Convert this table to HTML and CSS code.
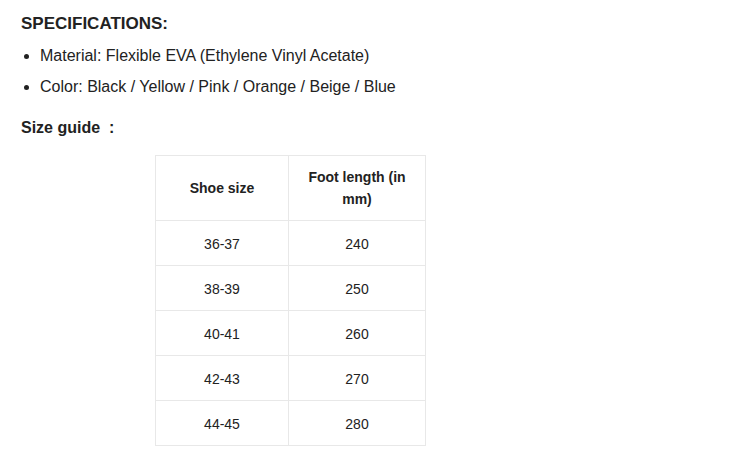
FILE: index.html
```html
<!DOCTYPE html>
<html>
<head>
<meta charset="utf-8">
<link rel="stylesheet" href="styles.css">
</head>
<body>
<div class="page">
  <h2 class="title">SPECIFICATIONS:</h2>
  <ul class="specs">
    <li>Material: Flexible EVA (Ethylene Vinyl Acetate)</li>
    <li>Color: Black / Yellow / Pink / Orange / Beige / Blue</li>
  </ul>
  <p class="guide">Size guide &nbsp;:</p>
  <table class="sizes">
    <colgroup><col class="c1"><col class="c2"></colgroup>
    <thead>
      <tr><th>Shoe size</th><th>Foot length (in mm)</th></tr>
    </thead>
    <tbody>
      <tr><td>36-37</td><td>240</td></tr>
      <tr><td>38-39</td><td>250</td></tr>
      <tr><td>40-41</td><td>260</td></tr>
      <tr><td>42-43</td><td>270</td></tr>
      <tr><td>44-45</td><td>280</td></tr>
    </tbody>
  </table>
</div>
</body>
</html>
```
FILE: styles.css
```css
html, body {
  margin: 0;
  padding: 0;
  background: #fff;
}
body {
  font-family: "Liberation Sans", Arial, sans-serif;
  color: #222;
}
.page {
  padding: 14px 0 0 21px;
}
.title {
  margin: 0;
  font-size: 17px;
  line-height: 20px;
  font-weight: bold;
}
.specs {
  margin: 6px 0 0 0;
  padding: 0 0 0 19px;
  font-size: 16px;
  line-height: 31px;
}
.guide {
  margin: 16px 0 0 0;
  font-size: 16px;
  line-height: 20px;
  font-weight: bold;
}
.sizes {
  margin: 17px 0 0 134px;
  border-collapse: collapse;
  font-size: 14px;
  table-layout: fixed;
  width: 270px;
}
.c1 { width: 133px; }
.c2 { width: 137px; }
.sizes th, .sizes td {
  border: 1px solid #e8e8e8;
  text-align: center;
  vertical-align: middle;
  line-height: 22px;
}
.sizes th {
  padding: 10px 14px;
  font-weight: bold;
}
.sizes td {
  padding: 12px 10px 10px;
}
```
